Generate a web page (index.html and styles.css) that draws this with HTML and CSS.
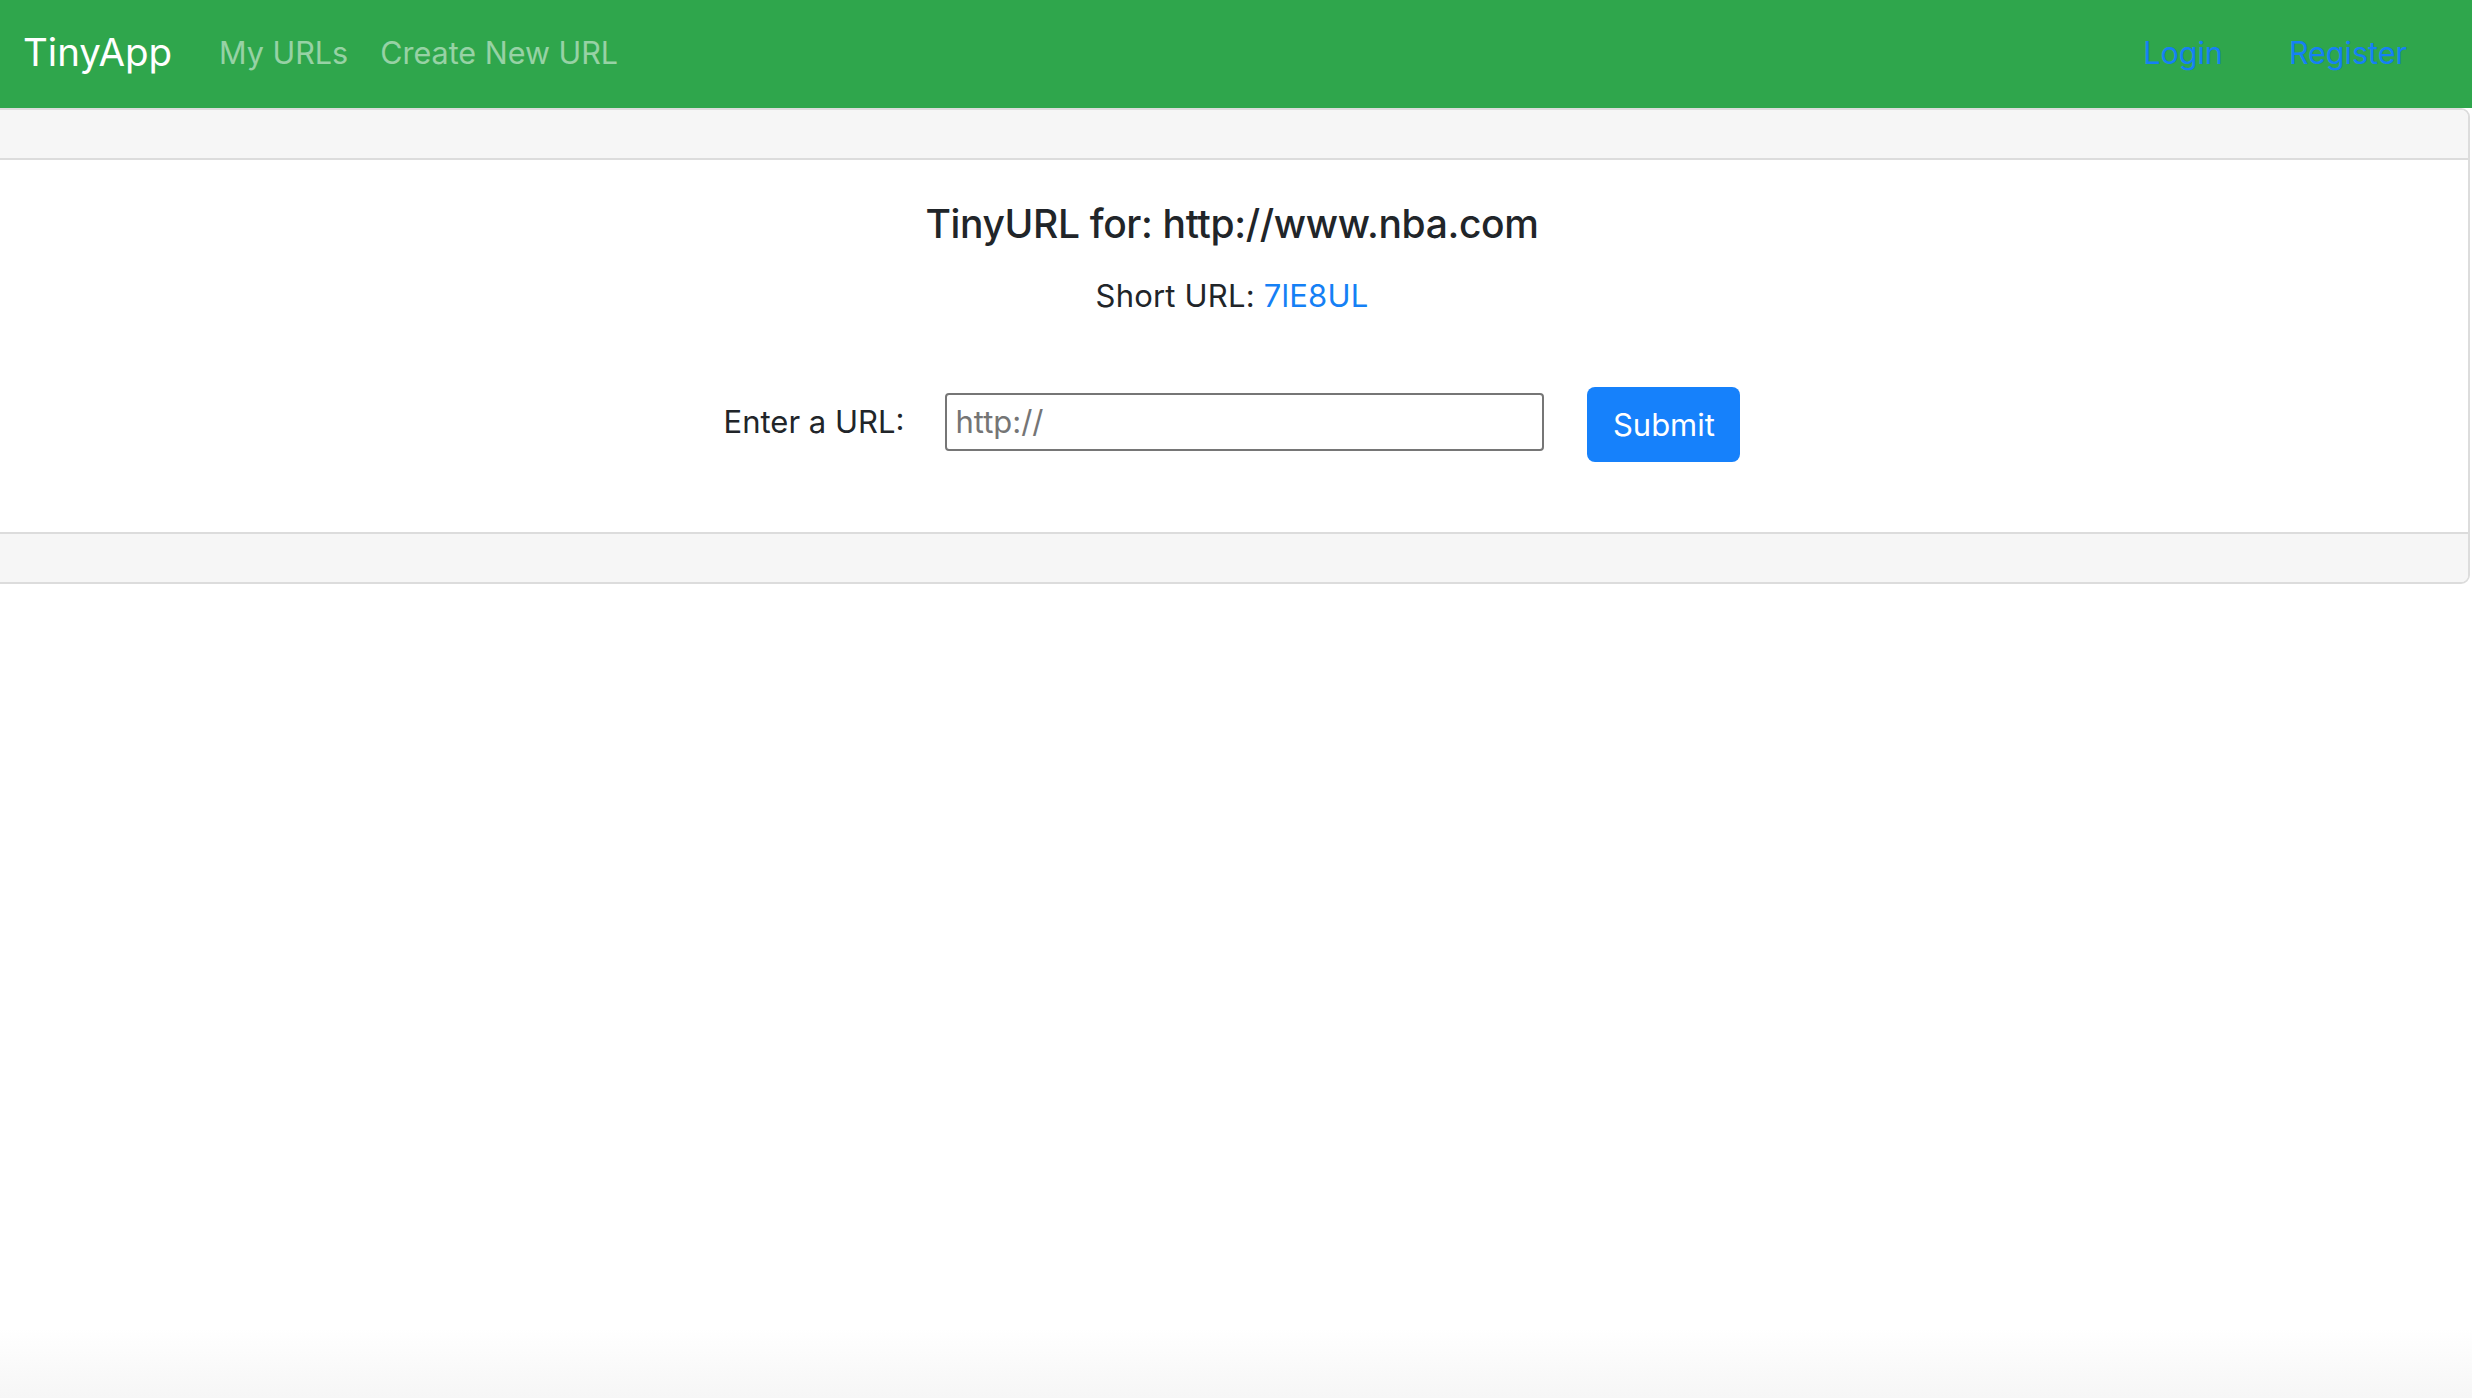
FILE: index.html
```html
<!DOCTYPE html>
<html lang="en">
<head>
<meta charset="utf-8">
<title>TinyApp</title>
<link rel="stylesheet" href="styles.css">
</head>
<body>
<nav class="navbar">
  <div class="nav-left">
    <a class="brand" href="#">TinyApp</a>
    <a class="nav-link first" href="#">My URLs</a>
    <a class="nav-link" href="#">Create New URL</a>
  </div>
  <div class="nav-right">
    <a class="auth-link" href="#">Login</a>
    <a class="auth-link" href="#">Register</a>
  </div>
</nav>
<main class="card">
  <div class="card-header"></div>
  <div class="card-body">
    <h5 class="card-title">TinyURL for: http://www.nba.com</h5>
    <p class="card-text">Short URL: <a class="short-link" href="#">7lE8UL</a></p>
    <form class="url-form">
      <label class="url-label" for="longURL">Enter a URL:</label>
      <input class="url-input" id="longURL" type="text" placeholder="http://">
      <button class="btn-primary" type="submit">Submit</button>
    </form>
  </div>
  <div class="card-footer"></div>
</main>
<div class="bottom-fade"></div>
</body>
</html>
```
FILE: styles.css
```css
html, body {
  margin: 0;
  padding: 0;
  background: #fff;
}
body {
  font-family: Inter, "Noto Sans", sans-serif;
  color: #212529;
  min-height: 1398px;
  position: relative;
  overflow: hidden;
}
a { text-decoration: none; }

.navbar {
  height: 108px;
  box-sizing: border-box;
  background: #2fa64c;
  display: flex;
  align-items: center;
  justify-content: space-between;
  padding: 0 65px 4px 23px;
}
.nav-left, .nav-right {
  display: flex;
  align-items: center;
}
.brand {
  color: #fff;
  font-size: 38.5px;
}
.nav-link {
  color: rgba(255,255,255,0.5);
  font-size: 30.5px;
  margin-left: 32px;
}
.nav-link.first { margin-left: 47px; }
.auth-link {
  color: #1580f5;
  font-size: 30.5px;
  margin-left: 66px;
}

.card {
  display: flex;
  flex-direction: column;
  margin: 0 2px 0 -8px;
  border: 2px solid #dcdcdc;
  border-radius: 0 9px 9px 0;
  overflow: hidden;
}
.card-header {
  height: 48px;
  background: #f6f6f6;
  border-bottom: 2px solid #dcdcdc;
}
.card-footer {
  height: 48px;
  background: #f6f6f6;
  border-top: 2px solid #dcdcdc;
}
.card-body {
  height: 372px;
  box-sizing: border-box;
  padding: 40px 0 0 2px;
  display: flex;
  flex-direction: column;
  align-items: center;
}
.card-title {
  margin: 0;
  font-size: 39px;
  line-height: 47px;
  font-weight: 500;
  letter-spacing: -0.35px;
}
.card-text {
  margin: 30px 0 0;
  font-size: 31px;
  line-height: 37px;
  letter-spacing: 0.2px;
}
.short-link { color: #1580f5; }

.url-form {
  margin-top: 73px;
  display: flex;
  align-items: center;
}
.url-label {
  font-size: 31px;
  margin-right: 41px;
  margin-top: -7px;
}
.url-input {
  width: 599px;
  height: 58px;
  box-sizing: border-box;
  border: 2px solid #767676;
  border-radius: 4px;
  padding: 0 8px;
  font-family: Inter, "Noto Sans", sans-serif;
  font-size: 31px;
  color: #212529;
  margin-top: -6px;
}
.url-input::placeholder { color: #757575; }
.btn-primary {
  margin-left: 43px;
  width: 153px;
  height: 75px;
  border: none;
  border-radius: 8px;
  background: #1681fb;
  color: #fff;
  font-family: Inter, "Noto Sans", sans-serif;
  font-size: 31px;
}

.bottom-fade {
  position: absolute;
  left: 0;
  right: 0;
  bottom: 0;
  height: 70px;
  background: linear-gradient(to bottom, rgba(240,240,240,0), rgba(240,240,240,0.6));
}
```
